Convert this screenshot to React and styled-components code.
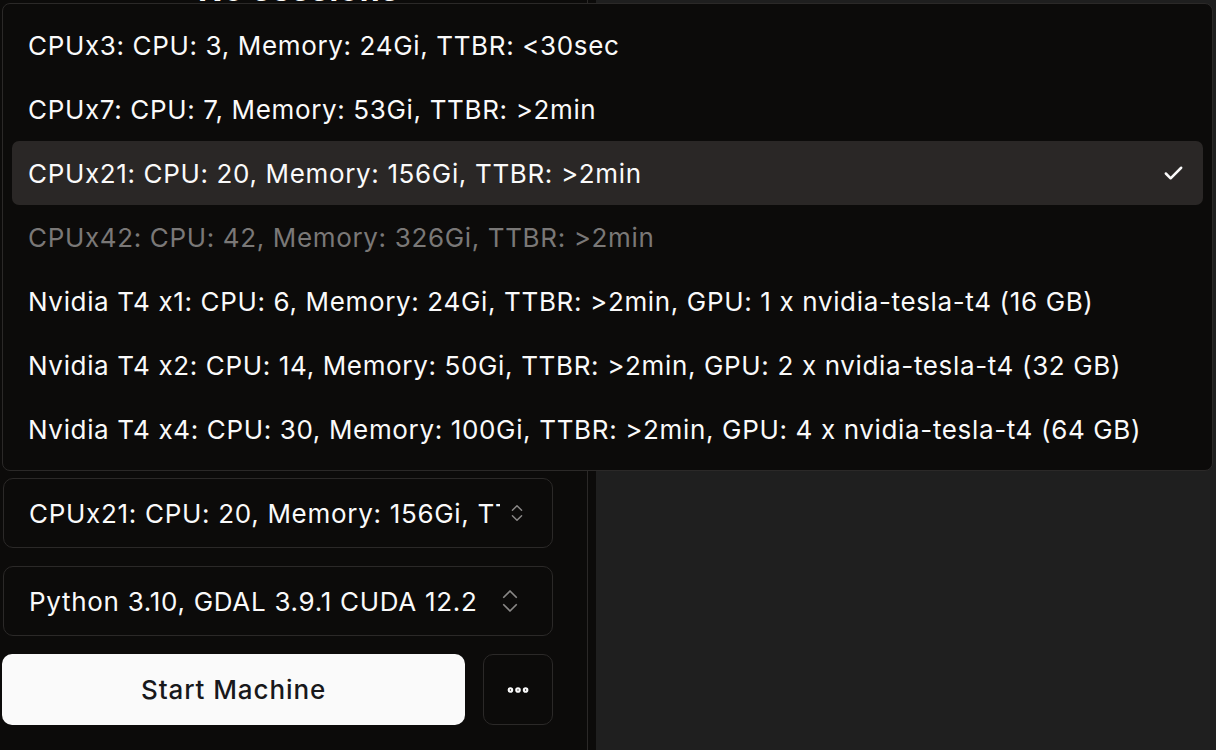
import React from 'react'
import styled, { createGlobalStyle } from 'styled-components'
import { Check, ChevronsUpDown, Ellipsis } from 'lucide-react'

const GlobalStyle = createGlobalStyle`
  html, body {
    margin: 0;
    padding: 0;
    background: #0c0b0a;
    font-family: Inter, "Noto Sans", sans-serif;
    font-feature-settings: "calt" 0;
    -webkit-font-smoothing: antialiased;
  }
`

const Page = styled.div`
  position: relative;
  display: flex;
  width: 1216px;
  height: 750px;
  overflow: hidden;
  background: #0c0b0a;
  color: #fafafa;
`

const Sidebar = styled.aside`
  width: 588px;
  flex-shrink: 0;
  display: flex;
  flex-direction: column;
  justify-content: space-between;
  border-right: 1px solid #2b2928;
  box-sizing: border-box;
  padding: 0 34px 25px 2px;
`

const Heading = styled.h2`
  margin: -30px 0 0 196px;
  font-size: 32px;
  font-weight: 700;
  letter-spacing: 1px;
  color: #fafafa;
`

const Controls = styled.div`
  display: flex;
  flex-direction: column;
  gap: 18px;
`

const Select = styled.button`
  display: flex;
  align-items: center;
  gap: 6px;
  height: 70px;
  margin-left: 1px;
  padding: 0 ${p => p.$padRight}px 0 25px;
  background: #0c0b0a;
  border: 1px solid #2b2928;
  border-radius: 10px;
  color: #fafafa;
  font-family: inherit;
  font-size: 26px;
  letter-spacing: 0.7px;
  text-align: left;
  box-sizing: border-box;
`

const SelectValue = styled.span`
  flex: 1;
  white-space: nowrap;
  overflow: hidden;
`

const Chevrons = styled(ChevronsUpDown)`
  flex-shrink: 0;
  color: #8a8887;
`

const ButtonRow = styled.div`
  display: flex;
  gap: 18px;
`

const StartButton = styled.button`
  width: 464px;
  height: 71px;
  background: #fafafa;
  border: none;
  border-radius: 10px;
  color: #18181b;
  font-family: inherit;
  font-size: 26px;
  font-weight: 500;
  letter-spacing: 0.9px;
`

const MoreButton = styled.button`
  width: 70px;
  height: 71px;
  display: flex;
  align-items: center;
  justify-content: center;
  background: #0c0b0a;
  border: 1px solid #2b2928;
  border-radius: 10px;
  color: #fafafa;
`

const Gutter = styled.div`
  width: 8px;
  flex-shrink: 0;
  background: #0c0b0a;
`

const Main = styled.main`
  flex: 1;
  background: #1f1f1f;
`

const Popover = styled.div`
  position: absolute;
  top: 3px;
  left: 2px;
  width: 1211px;
  box-sizing: border-box;
  padding: 9px 9px;
  background: #0c0b0a;
  border: 1px solid #2b2928;
  border-radius: 8px;
  display: flex;
  flex-direction: column;
`

const Option = styled.div`
  display: flex;
  align-items: center;
  justify-content: space-between;
  height: 64px;
  padding: 0 18px 0 16px;
  border-radius: 7px;
  font-size: 26px;
  letter-spacing: 0.65px;
  white-space: nowrap;
  background: ${p => (p.$active ? '#2a2726' : 'transparent')};
  color: ${p => (p.$disabled ? '#7a7877' : '#fafafa')};
`

const options = [
  'CPUx3: CPU: 3, Memory: 24Gi, TTBR: <30sec',
  'CPUx7: CPU: 7, Memory: 53Gi, TTBR: >2min',
  'CPUx21: CPU: 20, Memory: 156Gi, TTBR: >2min',
  'CPUx42: CPU: 42, Memory: 326Gi, TTBR: >2min',
  'Nvidia T4 x1: CPU: 6, Memory: 24Gi, TTBR: >2min, GPU: 1 x nvidia-tesla-t4 (16 GB)',
  'Nvidia T4 x2: CPU: 14, Memory: 50Gi, TTBR: >2min, GPU: 2 x nvidia-tesla-t4 (32 GB)',
  'Nvidia T4 x4: CPU: 30, Memory: 100Gi, TTBR: >2min, GPU: 4 x nvidia-tesla-t4 (64 GB)',
]

export default function App() {
  return (
    <Page>
      <GlobalStyle />
      <Sidebar>
        <Heading>No sessions</Heading>
        <Controls>
          <Select $padRight={24}>
            <SelectValue>CPUx21: CPU: 20, Memory: 156Gi, TTBR: &gt;2min</SelectValue>
            <Chevrons size={22} strokeWidth={1.6} />
          </Select>
          <Select $padRight={27}>
            <SelectValue>Python 3.10, GDAL 3.9.1 CUDA 12.2</SelectValue>
            <Chevrons size={30} strokeWidth={1.4} />
          </Select>
          <ButtonRow>
            <StartButton>Start Machine</StartButton>
            <MoreButton>
              <Ellipsis size={26} strokeWidth={3.2} />
            </MoreButton>
          </ButtonRow>
        </Controls>
      </Sidebar>
      <Gutter />
      <Main />
      <Popover>
        {options.map((o, i) => (
          <Option key={o} $active={i === 2} $disabled={i === 3}>
            <span>{o}</span>
            {i === 2 && <Check size={23} strokeWidth={2.6} />}
          </Option>
        ))}
      </Popover>
    </Page>
  )
}
